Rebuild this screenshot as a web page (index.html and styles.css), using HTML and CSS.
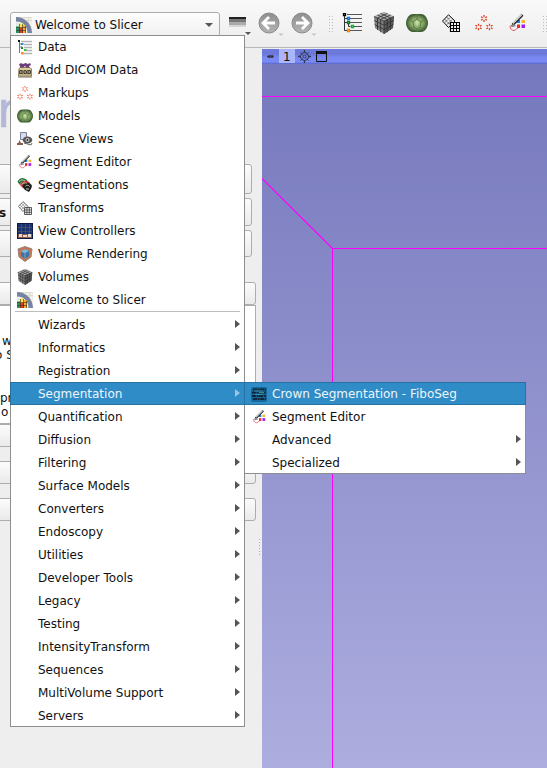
FILE: index.html
```html
<!DOCTYPE html>
<html lang="en">
<head>
<meta charset="utf-8">
<title>Slicer</title>
<link rel="stylesheet" href="styles.css">
</head>
<body>
<svg class="defs" width="0" height="0">
  <defs>
    <linearGradient id="grey" x1="0" y1="0" x2="0" y2="1"><stop offset="0" stop-color="#8e8e8e"/><stop offset="1" stop-color="#b4b4b4"/></linearGradient>
    <radialGradient id="green"><stop offset="0" stop-color="#b4d092"/><stop offset=".55" stop-color="#86a766"/><stop offset="1" stop-color="#3c5a30"/></radialGradient>
  </defs>
  <symbol id="data" viewBox="0 0 20 20">
    <path d="M2.500 2v15.500h3M2.500 5.500h3M2.500 9.500h3M6.500 11v2.500h2" fill="none" stroke="#333"/>
    <path d="M5 1.500h15M8 5.500h12M8 9.500h12M12 13.500h8M8 17.500h12" fill="none" stroke="#555"/>
    <g fill="#fff" stroke-width="1.300"><path stroke="#000" d="M1.500.5h2v2h-2z"/><path stroke="#0074e8" d="M5.500 4.500h2v2h-2z"/><path stroke="#067a20" d="M5.500 8.500h2v2h-2z"/><path stroke="#0bb030" d="M9.500 12.500h2v2h-2z"/><path stroke="#f08000" d="M5.500 16.500h2v2h-2z"/></g>
  </symbol>
  <symbol id="data-s" viewBox="0 0 16 16">
    <path d="M2.500 2v12M2.500 5h3M2.500 8h3" fill="none" stroke="#777"/>
    <path d="M4 2.500h11M7 5.500h8M7 8.500h8M9 11.500h6M6 14.500h9" fill="none" stroke="#b4b4b4" stroke-width="1.500"/>
    <path fill="#111" d="M1 1h2v2H1z"/><path fill="#2589ea" d="M4 4h2.500v2H4z"/><path fill="#208b38" d="M4 8h2v2H4z"/><path fill="#34be55" d="M7 10h2.500v2H7z"/><path fill="#ff9020" d="M4 13h2.500v2.500H4z"/>
  </symbol>
  <symbol id="dicom" viewBox="0 0 16 16">
    <path d="M2 7 3 5.500h10L14.500 7v7h-13z" fill="#dccb95" stroke="#8d7c58"/>
    <path d="M2 2.500 4 1l2 1 2.500-1L11 2l2-1 1 2-2 1 .5 1.500H9.500L8 4 6 5.500H3.500z" fill="#6b3f7e"/>
    <path d="M1.500 8h13v4.500h-13z" fill="#a89c7c"/>
    <path d="M2.500 8.500h3M7 8.500h2M10.500 8.500h3M2.500 11.500h3M7 11.500h2M10.500 11.500h3M2.500 9v2.500M5 9v2.500M7 9v2.500M9.500 9v2.500M11 9v2.500M13.500 9v2.500" stroke="#3e382f" stroke-width=".9"/>
    <path d="M1 15h14" stroke="#776a50"/>
  </symbol>
  <symbol id="star" viewBox="0 0 8 8"><path d="M4 0v2.500M4 5.500V8M.5 2l2 1.200M5.500 4.800l2 1.200M7.500 2l-2 1.200M2.500 4.800.5 6" stroke="currentColor" stroke-width="1.400"/></symbol>
  <symbol id="markups" viewBox="0 0 18 18">
    <use href="#star" x="5.500" y="1" width="7" height="7"/><use href="#star" x="0" y="9.500" width="7" height="7"/><use href="#star" x="11" y="9.500" width="7" height="7"/>
  </symbol>
  <symbol id="models" viewBox="0 0 22 18">
    <path d="M7 0h8c4 0 7 5 7 9s-3 9-7 9H7c-4 0-7-5-7-9s3-9 7-9z" fill="url(#green)"/>
    <path d="M11 0v5L7 8l1 5 3 2 3-2 1-5-4-3M7 8 2 4M15 8l5-4M8 13l-4 3M14 13l4 3M11 15v3" fill="none" stroke="#5a7a46" stroke-width=".9"/>
    <path d="M9 8l2-2 2 2-2 4z" fill="#bcdc99"/>
  </symbol>
  <symbol id="scene" viewBox="0 0 16 16">
    <path d="M3.500 1.500h6v7h-6z" fill="#d6daeb" stroke="#7c8099"/><path d="M1 13l1.500-4 2 4zM0 12h6v2H0z" fill="#8c5d52"/>
    <ellipse cx="10.500" cy="9" rx="4.800" ry="3.500" fill="#555"/><ellipse cx="10.500" cy="9" rx="2" ry="2" fill="#ccc"/><path d="M7 12l7 2 1-2" fill="none" stroke="#666"/><circle cx="10.500" cy="9" r=".9" fill="#222"/>
  </symbol>
  <symbol id="editor" viewBox="0 0 16 18">
    <path d="M8 6h3v3H8z" fill="#1587e8"/><path d="M12.500 6H16v3h-3.500z" fill="#ffb12b"/><path d="M8 10.500h3V14H8z" fill="#f02626"/><path d="M12.500 10.500H16V14h-3.500z" fill="#a41cf0"/>
    <path d="M13.500.8 3.500 11" stroke="#222" stroke-width="2.600"/><path d="M12.700.8 4 9.500" stroke="#ddd" stroke-width="1.300"/>
    <path d="M1 11.500 5 10l2 2-4 1.200z" fill="#888"/><path d="M1 12c0 3 2 4.500 4 4.500 1.500 0 2-2 4-2.500" fill="none" stroke="#e65363" stroke-width="1"/>
  </symbol>
  <symbol id="segs" viewBox="0 0 16 16">
    <path d="M.5 5c1.500-5 7-5 10-1.500l-2 3C6 4 4 5 3 8z" fill="#2c7840"/><path d="M3 8c1-4 7-6 10-2l-2 3C8 6 7 9 6 11z" fill="#c93432"/>
    <path d="M5.500 10c0-5 8-6 9.500-1l-1 3-2 3-4-2z" fill="#222"/><path d="M2 4.500c2-2 4-2 6-.5M4.500 7.500c2-2 4-2 5-1M8.500 9c1-1 3-1 4 .5M9 12h3" fill="none" stroke="#b8c5ae"/>
  </symbol>
  <symbol id="transforms" viewBox="0 0 18 18">
    <path d="M6.500.8 13 7 6.500 13.500.5 7z" fill="#eee" stroke="#111"/><path d="M4.500 3l6 6M2.500 5l6 6M8.500 3l-6 6M10.500 5l-6 6" stroke="#222" stroke-width="1" stroke-dasharray="1 1"/>
    <path d="M8.500 8.500h9v9h-9z" fill="#fff" stroke="#000" stroke-width="1.200"/><path d="M11.500 8v9.500M14.500 8v9.500M8 11.500h9.500M8 14.500h9.500" stroke="#000" stroke-width="1.100"/>
  </symbol>
  <symbol id="views" viewBox="0 0 16 16">
    <path d="M0 0h16v16H0z" fill="#0c194b"/><path d="M1 1h14v10H1z" fill="#19326f"/><path d="M4.500 1v10M8.500 1v10M12.500 1v10M1 4.500h14M1 8.500h14" stroke="#4d5468" stroke-width=".8"/><path d="M1 11h14v4H1z" fill="#8c5c4c"/><path d="M2 11h3v3H2zM11 11h3v3h-3zM6 12h4v2H6z" fill="#e9d8ce"/>
  </symbol>
  <symbol id="rendering" viewBox="0 0 16 16">
    <path d="M1 3 8 .5 15 3l-1 8-6 4.500L2 11z" fill="#c67550" stroke="#9a8279"/><path d="M4 5l4-2 4 2v5l-4 3-4-3z" fill="#3a76a9"/><path d="M4 5l4 2 4-2-4-2z" fill="#80b8d5"/><path d="M8 7v6M4 5l4 2" stroke="#9fb8c5" stroke-width=".7"/>
  </symbol>
  <symbol id="cube" viewBox="0 0 22 22">
    <path d="M11 0 21 4.500 20 16l-9 6-9-6L1 4.500z" fill="#808080"/><path d="M1 4.500 11 0l10 4.500L11 9z" fill="#b0b0b0"/><path d="M11 9l10-4.500L20 16l-9 6z" fill="#575757"/>
    <path d="M4.500 3l10 4.500M7.500 1.500l10 4.500M17.500 3l-10 4.500M14.500 1.500 4.500 6M1 4.500 11 9l10-4.500M11 9v13M4.500 6v12M7.700 7.500v12.700M14.300 7.500v12.700M17.500 6v12M1.300 8.500 11 13.200l9.700-4.700M1.700 12.500 11 17.500l9.300-5" fill="none" stroke="#303030" stroke-width=".8"/>
  </symbol>
  <symbol id="welcome" viewBox="0 0 16 16">
    <path d="M0 0h16v16H0z" fill="#f2f0e9"/><path d="M4 .5h12M12.500 0v8M8 3.500h8" stroke="#ddd9cc"/><path d="M0 0c9 0 16 7 16 16h-4.500C11.500 9 7 4.500 0 4.500z" fill="#7584a0"/>
    <path d="M0 7h3.500v9H0z" fill="#2c9360"/><path d="M3 6.500h4V11H3z" fill="#ffe05b"/><path d="M3 11h4v5H3z" fill="#e13b23"/><path d="M7 8h3v8H7z" fill="#f5ae36"/><path d="M0 6h3v3.500H0z" fill="#d8eee5"/>
    <path d="M0 10.500h10M0 13.500h10M3.500 7v9M6.500 7v9M9.500 9v7" stroke="#3b301d" stroke-width=".6"/>
  </symbol>
  <symbol id="crown" viewBox="0 0 16 16">
    <rect width="16" height="15" y="1" rx="2" fill="#16679b"/><path d="M2 3.500h13M1 6.500h14M1 10h14M2 13h13" stroke="#10273b" stroke-width="1.800" stroke-dasharray="4 .6 2 .5"/><path d="M3 5h9M4 8.500h8M8 6.500h5" stroke="#3f9fad" stroke-width=".8"/>
  </symbol>
</svg>

<div class="window">
  <header class="toolbar">
    <div class="combo"><svg class="i16"><use href="#welcome"/></svg><span>Welcome to Slicer</span><i class="down"></i></div>
    <div class="history"><i></i></div>
    <svg class="nav" viewBox="0 0 24 28"><circle cx="11" cy="13" r="10" fill="url(#grey)" stroke="#8a8a8a"/><path d="M17 13H6M11 7l-6 6 6 6" fill="none" stroke="#fff" stroke-width="2.800"/><path d="M20.500 23.500h5L23 26z" fill="#c4c4c4"/></svg>
    <svg class="nav" viewBox="0 0 24 28"><circle cx="11" cy="13" r="10" fill="url(#grey)" stroke="#8a8a8a"/><path d="M5 13h11M11 7l6 6-6 6" fill="none" stroke="#fff" stroke-width="2.800"/><path d="M20.500 23.500h5L23 26z" fill="#c4c4c4"/></svg>
    <i class="grip"></i>
    <div class="modules">
      <svg class="m-data"><use href="#data"/></svg>
      <svg class="m-cube"><use href="#cube"/></svg>
      <svg class="m-models"><use href="#models"/></svg>
      <svg class="m-trans"><use href="#transforms"/></svg>
      <svg class="m-mark"><use href="#markups"/></svg>
      <svg class="m-edit"><use href="#editor"/></svg>
    </div>
    <i class="grip last"></i>
  </header>

  <main class="content">
    <aside class="panel">
      <div class="logo">r</div>
      <div class="btn b1"></div>
      <div class="btn b2">s</div>
      <div class="btn b3"></div>
      <div class="btn wide b4"></div>
      <div class="textbox"><span class="t1">w</span><span class="t2">o S</span><span class="t3">pr</span><span class="t4">o</span></div>
      <div class="btn wide b5"></div>
      <div class="btn wide b6"></div>
      <div class="btn wide b6"></div>
    </aside>
    <div class="splitter"><i></i></div>
    <section class="view">
      <div class="viewbar">
        <svg width="66" height="14" viewBox="0 0 66 14"><path d="M5 7.500h7M5 7.500l3-1.500v3zM9 6.500h2v2H9z" fill="#333" stroke="#333" stroke-width=".6"/><path d="M17 0h16v15H17z" fill="#adb5fa"/><g fill="none" stroke="#303654"><circle cx="42.500" cy="7.500" r="4"/><circle cx="42.500" cy="7.500" r="1.500"/><path d="M42.500 1v3M42.500 11v3M36 7.500h3M46 7.500h3" stroke-width="1.300"/><path d="M38.500 3.500l2 2M46.500 3.500l-2 2M38.500 11.500l2-2M46.500 11.500l-2-2"/></g><path d="M54.500 2.500h10v10h-10z" fill="none" stroke="#111"/><path d="M54 2h11v3H54z" fill="#111"/></svg>
        <span>1</span>
      </div>
      <svg class="scene" width="285" height="704" viewBox="0 0 285 704">
        <g fill="#f0f"><rect x="0" y="32" width="285" height="1"/><rect x="70" y="184" width="215" height="1"/><rect x="70" y="184" width="1" height="520"/></g>
        <path d="M0 114.500 70.500 184.500" stroke="#f0f" stroke-width="1.200"/>
      </svg>
    </section>
  </main>

  <ul class="menu main-menu">
    <li><svg><use href="#data-s"/></svg>Data</li>
    <li><svg><use href="#dicom"/></svg>Add DICOM Data</li>
    <li><svg class="soft"><use href="#markups"/></svg>Markups</li>
    <li><svg><use href="#models"/></svg>Models</li>
    <li><svg><use href="#scene"/></svg>Scene Views</li>
    <li><svg class="small"><use href="#editor"/></svg>Segment Editor</li>
    <li><svg><use href="#segs"/></svg>Segmentations</li>
    <li><svg class="small dim"><use href="#transforms"/></svg>Transforms</li>
    <li><svg><use href="#views"/></svg>View Controllers</li>
    <li><svg><use href="#rendering"/></svg>Volume Rendering</li>
    <li><svg><use href="#cube"/></svg>Volumes</li>
    <li><svg><use href="#welcome"/></svg>Welcome to Slicer</li>
    <li class="sep"></li>
    <li class="sub">Wizards</li>
    <li class="sub">Informatics</li>
    <li class="sub">Registration</li>
    <li class="sub active">Segmentation</li>
    <li class="sub">Quantification</li>
    <li class="sub">Diffusion</li>
    <li class="sub">Filtering</li>
    <li class="sub">Surface Models</li>
    <li class="sub">Converters</li>
    <li class="sub">Endoscopy</li>
    <li class="sub">Utilities</li>
    <li class="sub">Developer Tools</li>
    <li class="sub">Legacy</li>
    <li class="sub">Testing</li>
    <li class="sub">IntensityTransform</li>
    <li class="sub">Sequences</li>
    <li class="sub">MultiVolume Support</li>
    <li class="sub">Servers</li>
  </ul>
  <ul class="menu sub-menu">
    <li class="active"><svg><use href="#crown"/></svg>Crown Segmentation - FiboSeg</li>
    <li><svg class="small"><use href="#editor"/></svg>Segment Editor</li>
    <li class="sub">Advanced</li>
    <li class="sub">Specialized</li>
  </ul>
</div>
</body>
</html>
```
FILE: styles.css
```css
* { box-sizing: border-box; }
body { margin: 0; font: 12px "DejaVu Sans", sans-serif; color: #111; }
.defs { position: absolute; }
.window { position: relative; width: 547px; height: 768px; overflow: hidden; background: #eee; display: flex; flex-direction: column; }

.toolbar { height: 48px; flex: none; display: flex; align-items: flex-start; padding-left: 10px; background: linear-gradient(#f9f9f9, #ededed); border-bottom: 1px solid #b9b9b9; }
.combo { width: 210px; height: 25px; margin-top: 12px; padding: 0 6px 0 5px; display: flex; align-items: center; gap: 3px; border: 1px solid #adadad; border-radius: 3px; background: linear-gradient(#fdfdfd, #f0f0f0); flex: none; }
.combo span { flex: 1; line-height: 24px; }
.i16 { width: 16px; height: 16px; }
.down { border: 4px solid transparent; border-top-color: #555; border-bottom: 0; }
.history { width: 24px; height: 18px; flex: none; margin: 17px 0 0 9px; display: flex; align-items: flex-end; justify-content: flex-end; background: linear-gradient(#222 0 2px, #777 2px 5px, #aaa 5px 8px, #d5d5d5 8px 10px, transparent 10px) no-repeat 0 0 / 17px 10px; }
.history i { border: 3px solid transparent; border-top-color: #555; border-bottom: 0; margin-right: 2px; }
.nav { width: 24px; height: 28px; flex: none; margin: 9.5px 0 0 5px; overflow: visible; }
.nav + .nav { margin-left: 9px; }
.grip { width: 5px; height: 17px; margin: 15px 0 0 13px; flex: none; background: radial-gradient(circle, #bbb 0 .8px, transparent 1px) 0 0 / 3px 3px; }
.modules { display: flex; flex: none; align-items: flex-start; color: #d83818; }
.m-data { width: 20px; height: 20px; margin: 13px 0 0 9px; }
.m-cube { width: 22px; height: 22px; margin: 12px 0 0 11px; }
.m-models { width: 22px; height: 18px; margin: 14px 0 0 11px; }
.m-trans { width: 18px; height: 18px; margin: 14px 0 0 14px; }
.m-mark { width: 18px; height: 18px; margin: 14px 0 0 15px; }
.m-edit { width: 16px; height: 18px; margin: 14px 0 0 16px; }
.grip.last { margin-left: 17px; }

.content { flex: 1; display: flex; min-height: 0; }
.panel { width: 256px; flex: none; overflow: hidden; }
.logo { height: 116px; padding-top: 35px; margin-left: -3px; font-size: 49px; line-height: 56px; color: #b4b8d8; -webkit-text-stroke: .6px #b4b8d8; }
.btn { width: 264px; margin-left: -12px; border: 1px solid #adadad; border-radius: 3px; background: linear-gradient(#fcfcfc, #eaeaea); }
.b1 { height: 30px; }
.b2 { height: 28px; margin-top: 4px; padding-left: 10px; font-weight: bold; line-height: 28px; }
.b3 { height: 27px; margin-top: 4px; }
.wide { width: 268px; height: 23px; }
.b4 { margin-top: 25px; }
.textbox { width: 268px; height: 119px; margin-left: -12px; border: 1px solid #adadad; background: #fff; padding: 28px 0 0 11px; white-space: pre; }
.textbox span { display: block; line-height: 14px; }
.textbox .t1 { padding-left: 2px; }
.textbox .t2 { margin-left: -5px; }
.textbox .t3 { margin-top: 29px; }
.textbox .t4 { padding-left: 1px; }
.b6 { margin-top: 14px; }
.splitter { width: 6px; flex: none; padding: 490px 0 0 2px; }
.splitter i { display: block; width: 3px; height: 17px; background: radial-gradient(circle, #aaa 0 .7px, transparent 1px) 0 0 / 3px 3px; }
.view { flex: 1; margin-top: 1px; display: flex; flex-direction: column; background: linear-gradient(#7477bc, #adaddf); }
.viewbar { height: 15px; flex: none; position: relative; background: linear-gradient(#6d79dc, #6b78d8 5px, #7787ee 8px, #7a8bf6 13px, #6070d2 14px); }
.viewbar svg { display: block; }
.viewbar span { position: absolute; left: 21px; top: 1px; line-height: 14px; }
.view > .scene { flex: none; display: block; }

.menu { position: absolute; margin: 0; padding: 0; list-style: none; background: #fff; box-shadow: inset 0 0 0 1px #8e8e8e; }
.main-menu { left: 10px; top: 35px; width: 235px; height: 692px; }
.sub-menu { left: 244px; top: 382px; width: 282px; height: 92px; }
.menu li { height: 23px; padding: 2px 0 0 28px; display: flex; align-items: center; line-height: 21px; }
.menu li svg { width: 16px; height: 16px; margin: -1px 5px 0 -21px; }
.menu li svg.small { width: 14px; height: 14px; margin: -1px 6px 0 -20px; }
.menu .soft { color: #ef7861; }
.menu .dim { opacity: .75; }
.menu li.sep { height: 2px; padding: 0; margin: 0 5px; border-top: 1px solid #bcbcbc; }
.menu li.sub::after { content: ""; margin: -3px 5px 0 auto; border: 4px solid transparent; border-left: 5px solid #555; border-right: 0; }
.menu li.active { background: #308cc6; color: #eef5fa; box-shadow: inset 0 0 0 1px #2772a2; }
.main-menu li.active { box-shadow: inset 0 1px #2772a2, inset 0 -1px #2772a2, inset 1px 0 #2772a2; }
.menu li.sub.active::after { border-left-color: #97c5e2; }
```
